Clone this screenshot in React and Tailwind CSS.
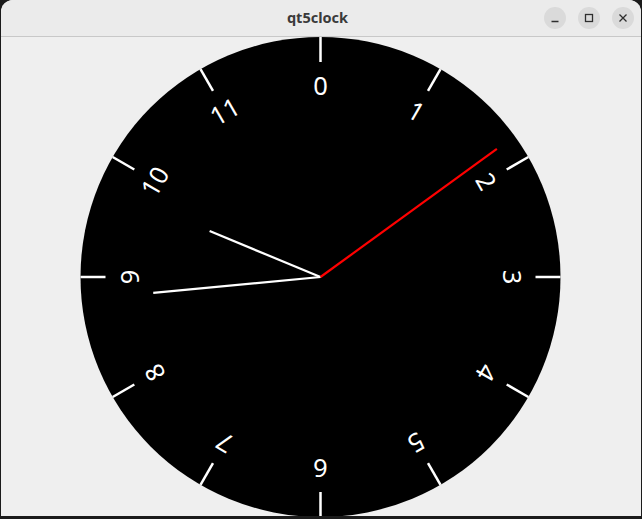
const CX = 319.5
const CY = 240
const R = 240

const hand = (angle, len) => {
  const a = (angle * Math.PI) / 180
  return { x2: CX + len * Math.sin(a), y2: CY - len * Math.cos(a) }
}

function ClockFace() {
  const hour = hand(292.5, 120)
  const minute = hand(264.6, 168)
  const second = hand(54, 218)

  return (
    <svg width="640" height="480" viewBox="0 0 640 480" className="block">
      <circle cx={CX} cy={CY} r={R} fill="#000" />
      {Array.from({ length: 12 }, (_, i) => (
        <g key={i} transform={`rotate(${i * 30} ${CX} ${CY})`}>
          <line x1={CX} y1={CY - R} x2={CX} y2={CY - 215} stroke="#fff" strokeWidth="2.5" />
          <text
            x={CX}
            y={CY - 192}
            fill="#fff"
            fontSize="25.5"
            textAnchor="middle"
            dominantBaseline="central"
            style={{ fontFamily: '"Noto Sans", "DejaVu Sans", sans-serif' }}
          >
            {i}
          </text>
        </g>
      ))}
      <line x1={CX} y1={CY} {...hour} stroke="#fff" strokeWidth="2.2" />
      <line x1={CX} y1={CY} {...minute} stroke="#fff" strokeWidth="2.2" />
      <line x1={CX} y1={CY} {...second} stroke="#f00" strokeWidth="2.2" />
    </svg>
  )
}

function TitleButton({ children }) {
  return (
    <div className="w-[22px] h-[22px] rounded-full bg-[#dadada] flex items-center justify-center">
      <svg width="10" height="10" viewBox="0 0 10 10" fill="none" stroke="#2e2e2e" strokeWidth="1.3">
        {children}
      </svg>
    </div>
  )
}

export default function App() {
  return (
    <div className="w-[642px] h-[519px] bg-[#1b1b1b] overflow-hidden">
      <div className="h-[516px] mx-px bg-[#efefef] rounded-t-[12px] flex flex-col overflow-hidden">
        <div className="h-[37px] shrink-0 bg-[#ebebeb] border-b border-[#c8c8c8] flex items-center">
          <div className="flex-1" />
          <span className="text-[14.5px] font-bold text-[#3a3a3a] font-['Noto_Sans',sans-serif]">qt5clock</span>
          <div className="flex-1 flex justify-end gap-3 pr-[7px]">
            <TitleButton>
              <line x1="1.5" y1="8.5" x2="8.5" y2="8.5" />
            </TitleButton>
            <TitleButton>
              <rect x="1.5" y="1.5" width="7" height="7" />
            </TitleButton>
            <TitleButton>
              <path d="M1.5 1.5 L8.5 8.5 M8.5 1.5 L1.5 8.5" />
            </TitleButton>
          </div>
        </div>
        <div className="flex-1">
          <ClockFace />
        </div>
      </div>
    </div>
  )
}
